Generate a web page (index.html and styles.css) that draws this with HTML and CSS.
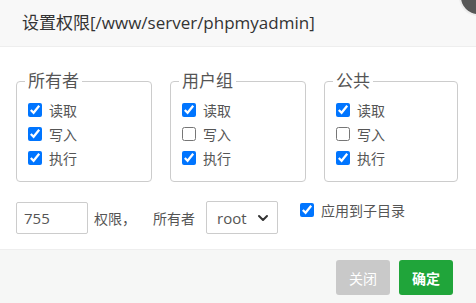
FILE: index.html
```html
<!DOCTYPE html>
<html lang="zh-CN">
<head>
    <meta charset="UTF-8">
    <title>设置权限</title>
    <link rel="stylesheet" href="styles.css">
</head>
<body>
    <div class="layer">
        <div class="layer-title">设置权限[/www/server/phpmyadmin]</div>
        <span class="layer-close"></span>

        <div class="layer-content">
            <div class="perm-groups">
                <fieldset class="perm-box">
                    <legend>所有者</legend>
                    <label class="perm-item"><input type="checkbox" checked> 读取</label>
                    <label class="perm-item"><input type="checkbox" checked> 写入</label>
                    <label class="perm-item"><input type="checkbox" checked> 执行</label>
                </fieldset>
                <fieldset class="perm-box">
                    <legend>用户组</legend>
                    <label class="perm-item"><input type="checkbox" checked> 读取</label>
                    <label class="perm-item"><input type="checkbox"> 写入</label>
                    <label class="perm-item"><input type="checkbox" checked> 执行</label>
                </fieldset>
                <fieldset class="perm-box">
                    <legend>公共</legend>
                    <label class="perm-item"><input type="checkbox" checked> 读取</label>
                    <label class="perm-item"><input type="checkbox"> 写入</label>
                    <label class="perm-item"><input type="checkbox" checked> 执行</label>
                </fieldset>
            </div>

            <div class="perm-row">
                <input type="text" class="perm-code" value="755">
                <span class="perm-label">权限，</span>
                <span class="owner-label">所有者</span>
                <span class="select-wrap">
                    <select class="owner-select">
                        <option>root</option>
                        <option>www</option>
                    </select>
                    <svg class="select-arrow" width="12" height="8" viewBox="0 0 12 8" fill="none" stroke="#333" stroke-width="2" stroke-linecap="round" stroke-linejoin="round">
                        <path d="M2 2l4 4 4-4"></path>
                    </svg>
                </span>
                <label class="sub-dir"><input type="checkbox" checked> 应用到子目录</label>
            </div>
        </div>

        <div class="layer-footer">
            <button class="btn btn-close">关闭</button>
            <button class="btn btn-ok">确定</button>
        </div>
    </div>
</body>
</html>
```

FILE: styles.css
```css
body {
    margin: 0;
    background: #fff;
    color: #555;
    font-family: "Open Sans", "Noto Sans CJK SC", sans-serif;
    font-size: 14px;
    overflow: hidden;
}

.layer {
    position: relative;
    width: 476px;
}

.layer-title {
    height: 46px;
    line-height: 46px;
    padding-left: 22px;
    background: #f8f8f8;
    border-bottom: 1px solid #eee;
    color: #333;
    font-size: 17px;
}

/* close button sits over the top-right corner */
.layer-close {
    position: absolute;
    top: -20px;
    right: -19px;
    width: 34px;
    height: 34px;
    border-radius: 50%;
    background: #575757;
    box-shadow: 0 0 0 2px #ececec;
}

.layer-content {
    padding: 23px 16px 15px;
}

.perm-groups {
    display: grid;
    grid-template-columns: 136px 136px 134px;
    column-gap: 18px;
}

.perm-box {
    margin: 0;
    padding: 6px 8px 11px 11px;
    border: 1px solid #ccc;
    border-radius: 4px;
    display: flex;
    flex-direction: column;
}

.perm-box legend {
    margin-left: -3px;
    padding: 0 3px;
    font-size: 17px;
    line-height: 22px;
    color: #555;
}

.perm-item {
    display: flex;
    align-items: center;
    height: 24px;
    gap: 7px;
    color: #555;
}

input[type="checkbox"] {
    width: 14px;
    height: 14px;
    margin: 0;
    accent-color: #0075ff;
}

.perm-row {
    display: flex;
    align-items: center;
    margin-top: 19px;
}

.perm-code {
    box-sizing: border-box;
    width: 72px;
    height: 32px;
    padding: 0 7px;
    border: 1px solid #ccc;
    border-radius: 2px;
    font: 15px "Open Sans", sans-serif;
    color: #555;
    outline: none;
}

.perm-label {
    margin-left: 6px;
    width: 59px;
    font-size: 14px;
}

.owner-label {
    font-size: 14px;
}

.select-wrap {
    position: relative;
    margin-left: 11px;
}

.owner-select {
    box-sizing: border-box;
    width: 72px;
    height: 33px;
    padding: 0 0 0 10px;
    border: 1px solid #ccc;
    border-radius: 2px;
    background: #fff;
    font: 15px "Open Sans", sans-serif;
    color: #555;
    appearance: none;
    -webkit-appearance: none;
    display: block;
}

.select-arrow {
    position: absolute;
    right: 9px;
    top: 13px;
    pointer-events: none;
}

.sub-dir {
    display: flex;
    align-items: center;
    gap: 7px;
    margin-left: 22px;
    margin-top: -15px;
    font-size: 14px;
}

.layer-footer {
    display: flex;
    justify-content: flex-end;
    gap: 9px;
    padding: 10px 23px 10px;
    background: #f6f7f6;
    border-top: 1px solid #eee;
    height: 54px;
    box-sizing: border-box;
}

.btn {
    height: 35px;
    padding: 0 13px;
    border: none;
    border-radius: 3px;
    color: #fff;
    font: 14px "Open Sans", "Noto Sans CJK SC", sans-serif;
}

.btn-close {
    background: #c9c9c9;
}

.btn-ok {
    background: #20a53a;
    font-weight: bold;
}
```
